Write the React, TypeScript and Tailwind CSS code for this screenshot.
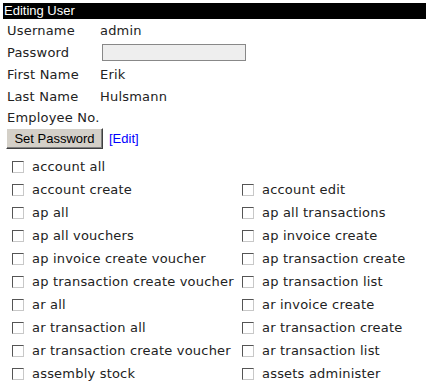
import React from "react";

const left = [
  "account all",
  "account create",
  "ap all",
  "ap all vouchers",
  "ap invoice create voucher",
  "ap transaction create voucher",
  "ar all",
  "ar transaction all",
  "ar transaction create voucher",
  "assembly stock",
];
const right = [
  "",
  "account edit",
  "ap all transactions",
  "ap invoice create",
  "ap transaction create",
  "ap transaction list",
  "ar invoice create",
  "ar transaction create",
  "ar transaction list",
  "assets administer",
];

function Box() {
  return (
    <span className="inline-block w-[12px] h-[12px] bg-white border border-t-[#555] border-l-[#555] border-b-[#c8c8c8] border-r-[#c8c8c8] shrink-0" />
  );
}

function Item({ label }: { label: string }) {
  if (!label) return <div className="h-[23px]" />;
  return (
    <div className="h-[23px] flex items-center">
      <div className="w-[21px] flex justify-start pl-[1px]">
        <Box />
      </div>
      <span>{label}</span>
    </div>
  );
}

export default function App() {
  const verdana = { fontFamily: '"DejaVu Sans", Verdana, sans-serif' };
  return (
    <div className="w-[426px] h-[385px] bg-white pt-[3px] pl-[3px] text-[#222] overflow-hidden">
      <div
        className="bg-black text-white h-[16px] leading-[16px] text-[13px] pl-[1px]"
        style={{ fontFamily: '"Liberation Sans", Arial, sans-serif' }}
      >
        Editing User
      </div>
      <div className="pl-[4px] text-[13px] tracking-[0.2px]" style={verdana}>
        <div className="h-[23px] flex items-center">
          <span className="w-[93px]">Username</span>
          <span>admin</span>
        </div>
        <div className="h-[21px] flex items-center">
          <span className="w-[95px]">Password</span>
          <span className="w-[144px] h-[17px] border border-[#888] bg-[#eeeeee]" />
        </div>
        <div className="h-[22px] flex items-center pt-[1px]">
          <span className="w-[93px]">First Name</span>
          <span>Erik</span>
        </div>
        <div className="h-[22px] flex items-center pt-[1px]">
          <span className="w-[93px]">Last Name</span>
          <span>Hulsmann</span>
        </div>
        <div className="h-[21px] flex items-center">
          <span className="w-[93px]">Employee No.</span>
          <span></span>
        </div>
        <div
          className="h-[21px] flex items-center gap-[6px] tracking-normal"
          style={{ fontFamily: '"Liberation Sans", Arial, sans-serif' }}
        >
          <button className="h-[21px] w-[97px] -ml-[1px] bg-[#d4d0c8] text-black text-[13px] border border-t-white border-l-white border-b-[#404040] border-r-[#404040] shadow-[inset_-1px_-1px_0_#808080]">
            Set Password
          </button>
          <span className="text-[#0000ff] text-[13px]">[Edit]</span>
        </div>
      </div>
      <div
        className="mt-[6px] pl-[8px] grid grid-cols-[230px_1fr] text-[13px] tracking-[0.2px]"
        style={verdana}
      >
        <div>
          {left.map((l) => (
            <Item key={l} label={l} />
          ))}
        </div>
        <div>
          {right.map((l, i) => (
            <Item key={i} label={l} />
          ))}
        </div>
      </div>
    </div>
  );
}
